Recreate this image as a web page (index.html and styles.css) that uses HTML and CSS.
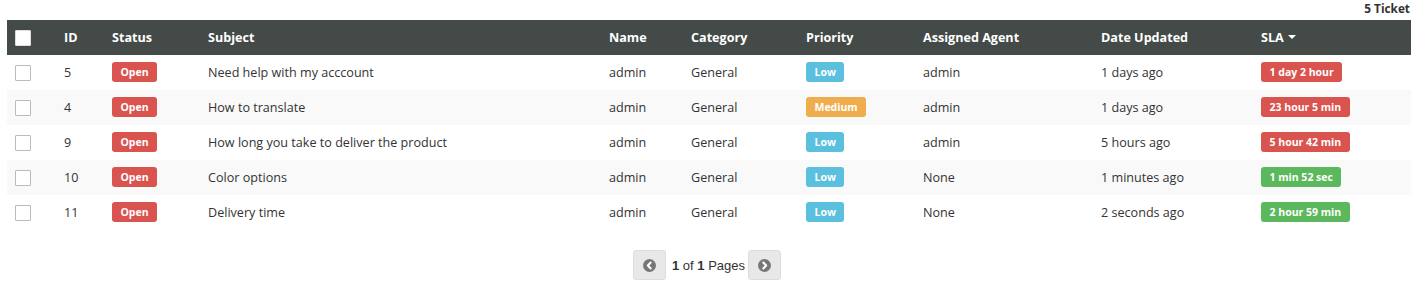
FILE: index.html
```html
<!DOCTYPE html>
<html>
<head>
<meta charset="utf-8">
<link rel="stylesheet" href="styles.css">
</head>
<body>
<div class="page">
  <div class="count">5 Ticket</div>
  <table class="tickets">
    <colgroup>
      <col class="c-check"><col class="c-id"><col class="c-status"><col class="c-subject"><col class="c-name"><col class="c-cat"><col class="c-pri"><col class="c-agent"><col class="c-date"><col class="c-sla">
    </colgroup>
    <thead>
      <tr>
        <th><span class="cb cb-head"></span></th>
        <th>ID</th><th>Status</th><th>Subject</th><th>Name</th><th>Category</th><th>Priority</th><th>Assigned Agent</th><th>Date Updated</th>
        <th>SLA <span class="caret"></span></th>
      </tr>
    </thead>
    <tbody>
      <tr>
        <td><span class="cb"></span></td><td>5</td><td><span class="badge red">Open</span></td><td>Need help with my acccount</td><td>admin</td><td>General</td><td><span class="badge blue">Low</span></td><td>admin</td><td>1 days ago</td><td><span class="badge red">1 day 2 hour</span></td>
      </tr>
      <tr>
        <td><span class="cb"></span></td><td>4</td><td><span class="badge red">Open</span></td><td>How to translate</td><td>admin</td><td>General</td><td><span class="badge orange">Medium</span></td><td>admin</td><td>1 days ago</td><td><span class="badge red">23 hour 5 min</span></td>
      </tr>
      <tr>
        <td><span class="cb"></span></td><td>9</td><td><span class="badge red">Open</span></td><td>How long you take to deliver the product</td><td>admin</td><td>General</td><td><span class="badge blue">Low</span></td><td>admin</td><td>5 hours ago</td><td><span class="badge red">5 hour 42 min</span></td>
      </tr>
      <tr>
        <td><span class="cb"></span></td><td>10</td><td><span class="badge red">Open</span></td><td>Color options</td><td>admin</td><td>General</td><td><span class="badge blue">Low</span></td><td>None</td><td>1 minutes ago</td><td><span class="badge green">1 min 52 sec</span></td>
      </tr>
      <tr>
        <td><span class="cb"></span></td><td>11</td><td><span class="badge red">Open</span></td><td>Delivery time</td><td>admin</td><td>General</td><td><span class="badge blue">Low</span></td><td>None</td><td>2 seconds ago</td><td><span class="badge green">2 hour 59 min</span></td>
      </tr>
    </tbody>
  </table>
  <div class="pager">
    <button class="pbtn" type="button">
      <svg width="13" height="13" viewBox="0 0 14 14"><circle cx="7" cy="7" r="7" fill="#777"/><path d="M8.3 3.8 L5.2 7 L8.3 10.2" fill="none" stroke="#fff" stroke-width="2.2" stroke-linecap="round" stroke-linejoin="round"/></svg>
    </button>
    <span class="ptext"><b>1</b> of <b>1</b> Pages</span>
    <button class="pbtn" type="button">
      <svg width="13" height="13" viewBox="0 0 14 14"><circle cx="7" cy="7" r="7" fill="#777"/><path d="M5.7 3.8 L8.8 7 L5.7 10.2" fill="none" stroke="#fff" stroke-width="2.2" stroke-linecap="round" stroke-linejoin="round"/></svg>
    </button>
  </div>
</div>
</body>
</html>
```

FILE: styles.css
```css
html, body {
  margin: 0;
  padding: 0;
  background: #fff;
}
.page {
  padding: 0 7px;
  font-family: "Open Sans", "Liberation Sans", sans-serif;
  font-size: 12.6px;
  color: #333;
}
.count {
  text-align: right;
  font-weight: bold;
  line-height: 16px;
  height: 16px;
  margin-bottom: 4px;
  padding-right: 1px;
  font-size: 11.8px;
}
.tickets {
  width: 1404px;
  table-layout: fixed;
  border-collapse: collapse;
  border-spacing: 0;
}
.c-check { width: 49px; }
.c-id { width: 48px; }
.c-status { width: 96px; }
.c-subject { width: 401px; }
.c-name { width: 82px; }
.c-cat { width: 115px; }
.c-pri { width: 117px; }
.c-agent { width: 178px; }
.c-date { width: 160px; }
.c-sla { width: 158px; }
.tickets th, .tickets td {
  height: 35px;
  padding: 0 8px 1px;
  text-align: left;
  vertical-align: middle;
  white-space: nowrap;
  box-sizing: border-box;
}
.tickets thead tr {
  background: #434a48;
}
.tickets th {
  color: #fff;
  font-weight: bold;
}
.tickets tbody tr:nth-child(even) {
  background: #f9f9f9;
}
.cb {
  display: block;
  width: 16px;
  height: 16px;
  box-sizing: border-box;
  border: 1px solid #bbb;
  background: #fff;
  border-radius: 1px;
  margin-top: 1px;
}
.cb-head {
  border-color: #ddd;
}
.caret {
  display: inline-block;
  width: 0;
  height: 0;
  border-left: 4px solid transparent;
  border-right: 4px solid transparent;
  border-top: 4px solid #fff;
  vertical-align: middle;
  margin-left: 1px;
  margin-bottom: 2px;
}
.badge {
  display: inline-block;
  height: 20px;
  line-height: 20px;
  padding: 0 8.5px;
  border-radius: 3px;
  color: #fff;
  font-weight: bold;
  font-size: 10.5px;
  vertical-align: middle;
}
.red { background: #d9534f; }
.blue { background: #5bc0de; }
.orange { background: #f0ad4e; }
.green { background: #5cb85c; }
.pager {
  display: flex;
  justify-content: center;
  align-items: center;
  margin-top: 20px;
  padding-right: 4px;
  font-family: "Liberation Sans", Arial, sans-serif;
  font-size: 13px;
  color: #333;
}
.ptext {
  margin: 0 3px 0 6px;
}
.pbtn {
  width: 33px;
  height: 30px;
  padding: 0;
  margin: 0;
  border: 1px solid #ddd;
  border-radius: 3px;
  background: #e8e8e8;
  display: flex;
  align-items: center;
  justify-content: center;
}
.pbtn svg { display: block; }
```
